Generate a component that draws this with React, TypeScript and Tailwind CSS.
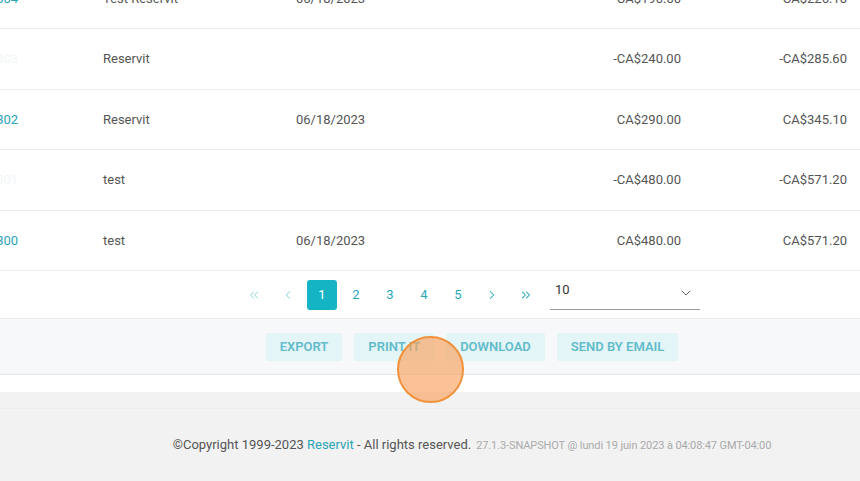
import { ChevronDown, ChevronLeft, ChevronRight, ChevronsLeft, ChevronsRight } from 'lucide-react';

type Row = {
  id: string;
  idMuted?: boolean;
  label: string;
  date: string;
  amount: string;
  total: string;
};

const ROWS: Row[] = [
  { id: '4819304', label: 'Test Reservit', date: '06/18/2023', amount: 'CA$190.00', total: 'CA$226.10' },
  { id: '4819303', idMuted: true, label: 'Reservit', date: '', amount: '-CA$240.00', total: '-CA$285.60' },
  { id: '4819302', label: 'Reservit', date: '06/18/2023', amount: 'CA$290.00', total: 'CA$345.10' },
  { id: '4819301', idMuted: true, label: 'test', date: '', amount: '-CA$480.00', total: '-CA$571.20' },
  { id: '4819300', label: 'test', date: '06/18/2023', amount: 'CA$480.00', total: 'CA$571.20' },
];

const ACTIONS = ['Export', 'Print it', 'Download', 'Send by email'];

function InvoiceRow({ row }: { row: Row }) {
  return (
    <div className="flex h-[60.5px] items-center border-b border-[#ebebeb] text-[13px] text-[#555]">
      <div className={`w-[136px] shrink-0 ${row.idMuted ? 'text-[#f1f6f7]' : 'text-[#2aa3b4]'}`}>{row.id}</div>
      <div className="w-[193px] shrink-0">{row.label}</div>
      <div className="w-[140px] shrink-0">{row.date}</div>
      <div className="w-[245px] shrink-0 text-right">{row.amount}</div>
      <div className="w-[166px] shrink-0 text-right">{row.total}</div>
    </div>
  );
}

function PageButton({ children, active }: { children: React.ReactNode; active?: boolean }) {
  return (
    <button
      type="button"
      className={`flex h-[30px] w-[30px] items-center justify-center rounded-[3px] text-[13px] ${
        active ? 'bg-[#14b4c5] text-white' : 'text-[#2aa8b8]'
      }`}
    >
      {children}
    </button>
  );
}

function Pagination() {
  return (
    <div className="flex h-[48px] items-center justify-center border-b border-[#e6e8ea] pl-[79px]">
      <div className="flex items-center gap-[4px]">
        <PageButton>
          <ChevronsLeft size={14} strokeWidth={1.6} className="text-[#7ccbd6]" />
        </PageButton>
        <PageButton>
          <ChevronLeft size={14} strokeWidth={1.6} className="text-[#7ccbd6]" />
        </PageButton>
        <PageButton active>1</PageButton>
        <PageButton>2</PageButton>
        <PageButton>3</PageButton>
        <PageButton>4</PageButton>
        <PageButton>5</PageButton>
        <PageButton>
          <ChevronRight size={14} strokeWidth={1.8} />
        </PageButton>
        <PageButton>
          <ChevronsRight size={14} strokeWidth={1.8} />
        </PageButton>
      </div>
      <div className="ml-[9px] flex h-[31px] w-[150px] items-start justify-between border-b border-[#9a9a9a] pl-[5px] pr-[6px] pt-[1px] text-[13px] text-[#333]">
        <span>10</span>
        <ChevronDown size={16} strokeWidth={1.5} className="mt-[5px] text-[#666]" />
      </div>
    </div>
  );
}

export default function App() {
  return (
    <div className="relative h-[481px] w-[860px] overflow-hidden bg-white font-['Roboto',sans-serif]">
      <div className="-mt-[31.5px]">
        <div className="-ml-[33px]">
          {ROWS.map((r) => (
            <InvoiceRow key={r.id} row={r} />
          ))}
        </div>

        <Pagination />

        <div className="flex h-[56px] items-center justify-center gap-[12px] border-b border-[#e4e6e8] bg-[#f6f8fa] pl-[84px]">
          {ACTIONS.map((a) => (
            <button
              key={a}
              type="button"
              className="h-[28px] rounded-[2px] bg-[#e4f5f7] px-[14px] text-[13px] font-semibold uppercase text-[#62bccb]"
            >
              {a}
            </button>
          ))}
        </div>

        <div className="h-[17px]" />

        <footer className="flex h-[100px] flex-col bg-[#f2f2f2]">
          <div className="h-[17px] border-b border-[#ececec]" />
          <div className="flex flex-1 items-start justify-center pl-[84px] pt-[26px]">
            <p className="flex items-baseline gap-[5px] text-[13px] text-[#555]">
              <span>
                ©Copyright 1999-2023 <a className="text-[#2aa3b4]">Reservit</a> - All rights reserved.
              </span>
              <span className="text-[11px] tracking-[-0.01em] text-[#aaa]">
                27.1.3-SNAPSHOT @ lundi 19 juin 2023 à 04:08:47 GMT-04:00
              </span>
            </p>
          </div>
        </footer>
      </div>

      {/* click marker */}
      <div className="pointer-events-none absolute left-[397px] top-[336px] h-[67px] w-[67px] rounded-full border-2 border-[#f0913c] bg-[#f7a25e]/65" />
    </div>
  );
}
